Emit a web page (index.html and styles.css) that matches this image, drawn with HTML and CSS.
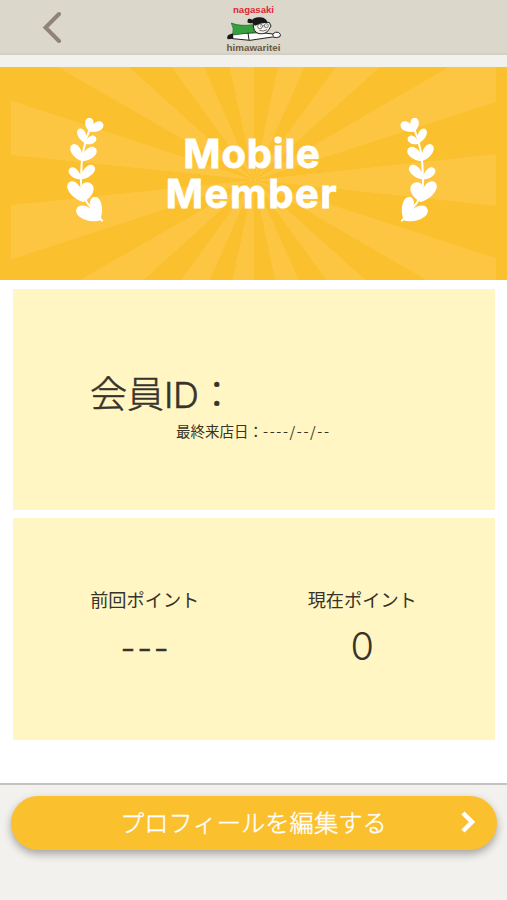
FILE: index.html
```html
<!DOCTYPE html>
<html lang="ja">
<head>
    <meta charset="UTF-8">
    <meta name="viewport" content="width=device-width, initial-scale=1.0">
    <title>Mobile Member</title>
    <link rel="stylesheet" href="styles.css">
</head>
<body>
    <header class="header">
        <a class="back" href="#" aria-label="back">
            <svg width="20" height="32" viewBox="0 0 20 32"><path d="M17 3L3.500 16.500L17 30" fill="none" stroke="#8f837b" stroke-width="4" stroke-linecap="round"/></svg>
        </a>
        <div class="logo">
            <span class="logoTop">nagasaki</span>
            <svg class="logoImage" width="56" height="26" viewBox="78 48 168 78">
                <path d="M92 103L145 99L186 98L218 102Q226 94 235 97Q245 102 240 110Q232 115 217 111L150 121L98 116Z" fill="#fff" stroke="#222" stroke-width="3"/>
                <path d="M94 69Q120 80 158 74L164 97L98 105Q103 85 94 69Z" fill="#35a03d" stroke="#176523" stroke-width="2"/>
                <path d="M83 118Q79 109 86 104L99 101L100 116Z" fill="#181818"/>
                <path d="M144 98L147 120M218 102L220 110" stroke="#222" stroke-width="3"/>
                <path d="M160 69Q158 96 177 101Q199 104 207 88L213 78L208 67Z" fill="#f5f2ea" stroke="#222" stroke-width="3"/>
                <path d="M144 57Q150 55 157 59Q166 50 182 52Q199 54 203 68Q184 67 165 77L157 69Q146 71 142 66Z" fill="#181818"/>
                <circle cx="180" cy="79" r="7" fill="#fff" stroke="#333" stroke-width="2"/>
                <circle cx="199" cy="77" r="6" fill="#fff" stroke="#333" stroke-width="2"/>
                <path d="M187 78L193 77M178 91Q190 96 201 89M180 78L183 79M198 77L200 77" fill="none" stroke="#333" stroke-width="2"/>
            </svg>
            <span class="logoBottom">himawaritei</span>
        </div>
    </header>

    <main class="main">
        <section class="banner">
            <div class="rays">
                <svg class="laurel" viewBox="0 0 150 360">
                    <defs>
                        <path id="leaf" d="M0 0C-45 -35 -45 -100 0 -100C45 -100 45 -35 0 0"/>
                        <g id="branch" fill="#fff">
                            <path d="M90 55C70 100 64 150 63 200C62 240 68 260 84 282L126 332" fill="none" stroke="#fff" stroke-width="6" stroke-linecap="round"/>
                            <use href="#leaf" transform="translate(88 64) rotate(0) scale(.37 .41)"/>
                            <use href="#leaf" transform="translate(86 64) rotate(61) scale(.40 .49)"/>
                            <use href="#leaf" transform="translate(78 101) rotate(-25) scale(.36 .49)"/>
                            <use href="#leaf" transform="translate(76 101) rotate(58) scale(.34 .37)"/>
                            <use href="#leaf" transform="translate(66 153) rotate(-31) scale(.42 .57)"/>
                            <use href="#leaf" transform="translate(63 153) rotate(49) scale(.46 .58)"/>
                            <use href="#leaf" transform="translate(63 208) rotate(-46) scale(.38 .47)"/>
                            <use href="#leaf" transform="translate(60 208) rotate(46) scale(.42 .58)"/>
                            <use href="#leaf" transform="translate(72 276) rotate(-37) scale(.52 .74)"/>
                            <use href="#leaf" transform="translate(68 276) rotate(19) scale(.58 .61)"/>
                            <use href="#leaf" transform="translate(122 331) rotate(-64) scale(.56 .80)"/>
                            <use href="#leaf" transform="translate(119 331) rotate(-14) scale(.50 .72)"/>
                        </g>
                    </defs>
                    <use href="#branch"/>
                </svg>
                <h1 class="title">Mobile<br><span class="member">Member</span></h1>
                <svg class="laurel right" viewBox="0 0 150 360"><use href="#branch"/></svg>
            </div>
        </section>

        <section class="card idCard">
            <p class="memberId">会員<span class="latin">ID</span>：</p>
            <p class="lastVisit">最終来店日：<span class="date">----/--/--</span></p>
        </section>

        <section class="card pointCard">
            <div class="point">
                <h2 class="pointTitle">前回ポイント</h2>
                <p class="pointValue dashes">---</p>
            </div>
            <div class="point">
                <h2 class="pointTitle">現在ポイント</h2>
                <p class="pointValue">0</p>
            </div>
        </section>
    </main>

    <footer class="footer">
        <a class="editButton" href="#">
            <span class="editLabel">プロフィールを編集する</span>
            <svg class="arrow" width="16" height="24" viewBox="0 0 16 24"><path d="M3 3L12 12L3 21" fill="none" stroke="#fff" stroke-width="4.500"/></svg>
        </a>
    </footer>
</body>
</html>
```

FILE: styles.css
```css
*, *:before, *:after {
    box-sizing: border-box;
}
body, h1, h2, p {
    margin: 0;
    font-weight: normal;
}
body {
    display: flex;
    flex-direction: column;
    height: 900px;
    overflow: hidden;
    background-color: #f2f1ed;
    color: #37332a;
    font-family: "Noto Sans CJK JP", sans-serif;
}
a {
    text-decoration: none;
}

/* Header */
.header {
    display: grid;
    grid-template-columns: 1fr 80px 1fr;
    height: 55px;
    background-color: #dbd7ca;
    border-bottom: 2px solid #d2cfc4;
}
.back {
    padding: 11px 0 0 42px;
}
.back svg {
    display: block;
}
.logo {
    display: flex;
    flex-direction: column;
    align-items: center;
    padding-top: 4px;
    font-family: "Liberation Sans", sans-serif;
    font-weight: bold;
    line-height: 11px;
}
.logoTop {
    color: #dd2635;
    font-size: 9.6px;
}
.logoImage {
    margin-top: 1px;
}
.logoBottom {
    color: #6b5840;
    font-size: 9.8px;
}

/* Banner */
.main {
    height: 716px;
    margin-top: 12px;
    background-color: #fff;
}
.banner {
    height: 213px;
    padding: 0 11px;
    background-color: #fbc02d;
}
.rays {
    display: flex;
    justify-content: space-between;
    height: 100%;
    padding: 43px 52px 0 49px;
    background: repeating-conic-gradient(from 84deg at 243px 113px, #fdc642 0 12deg, #fbc02d 12.2deg 23.8deg, #fdc642 24deg);
}
.laurel {
    width: 50px;
    height: 120px;
}
.laurel.right {
    transform: scaleX(-1);
}
.title {
    padding-top: 24px;
    color: #fff;
    font-family: Inter, sans-serif;
    font-size: 40px;
    font-weight: 700;
    line-height: 40px;
    letter-spacing: 0.8px;
    text-align: center;
    -webkit-text-stroke: 0.8px #fff;
}
.member {
    letter-spacing: 1.6px;
}

/* Cards */
.card {
    height: 222px;
    margin: 8px 12px 0 13px;
    background-color: #fff6c4;
}
.card.idCard {
    margin-top: 9px;
    height: 221px;
    padding-top: 75px;
}
.memberId {
    height: 56px;
    padding-left: 77px;
    font-size: 37px;
    font-weight: 300;
    line-height: 56px;
    -webkit-text-stroke: 0.5px #37332a;
}
.latin {
    font-family: Inter, sans-serif;
    font-size: 36px;
    letter-spacing: -0.5px;
}
.lastVisit {
    padding-left: 163px;
    font-size: 14.500px;
    line-height: 22px;
}
.date {
    letter-spacing: 1.6px;
}
.pointCard {
    display: flex;
    padding: 67px 24px 0 23px;
}
.point {
    flex: 1;
    text-align: center;
}
.pointTitle {
    font-size: 18.200px;
    line-height: 28px;
}
.pointValue {
    font-family: Inter, sans-serif;
    font-size: 38px;
    font-weight: 300;
    line-height: 66px;
}
.dashes {
    padding-left: 3px;
    font-family: "Noto Sans CJK JP", sans-serif;
    font-size: 40px;
    line-height: 62px;
    letter-spacing: 3.3px;
    -webkit-text-stroke: 0.6px #37332a;
}

/* Footer */
.footer {
    flex: 1;
    padding: 11px 10px 0 11px;
    border-top: 2px solid #c4c3c1;
}
.editButton {
    display: flex;
    align-items: center;
    height: 54px;
    padding: 0 21px 0 109px;
    border-radius: 27px;
    background-color: #fbc02d;
    box-shadow: 0 4px 8px rgba(0,0,0,0.32);
    color: #fff;
}
.arrow {
    margin: 0 0 3px;
}
.editLabel {
    flex: 1;
    padding-bottom: 3px;
    font-size: 24.300px;
    font-weight: 300;
    line-height: 51px;
    white-space: nowrap;
    -webkit-text-stroke: 0.4px #fff;
}
```
